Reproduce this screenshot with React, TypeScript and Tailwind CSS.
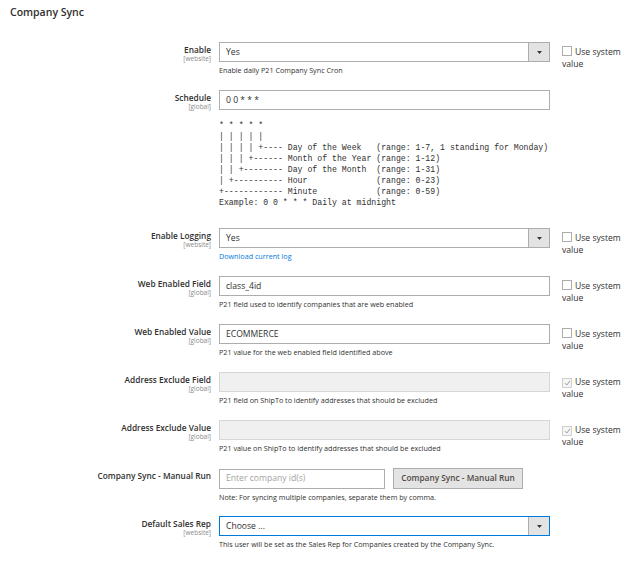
import React from 'react'

const cron = `* * * * *
| | | | |
| | | | +---- Day of the Week   (range: 1-7, 1 standing for Monday)
| | | +------ Month of the Year (range: 1-12)
| | +-------- Day of the Month  (range: 1-31)
| +---------- Hour              (range: 0-23)
+------------ Minute            (range: 0-59)
Example: 0 0 * * * Daily at midnight`

type RowProps = {
  label: string
  scope?: string
  system?: 'off' | 'on'
  className: string
  children: React.ReactNode
}

const Row: React.FC<RowProps> = ({ label, scope, system, className, children }) => (
  <div className={`flex ${className}`}>
    <div className="w-[211px] shrink-0 pt-[3px] text-right">
      <div className="text-[8.3px] font-semibold leading-[10px]">{label}</div>
      {scope && <div className="text-[6.5px] leading-[8px] text-[#8a8a8a]">[{scope}]</div>}
    </div>
    <div className="ml-[8px] w-[331px] shrink-0">{children}</div>
    {system && (
      <div className="ml-[12px] w-[62px] whitespace-nowrap pt-[4px] text-[8.6px] leading-[12px]">
        {system === 'on' ? (
          <span className="mr-[3px] inline-flex h-[10px] w-[10px] items-center justify-center border border-[#d0d0d0] bg-[#f5f5f5] align-[-1px]">
            <svg width="7" height="6" viewBox="0 0 7 6">
              <path d="M1 3.2 L2.8 5 L6 1" fill="none" stroke="#9a9a9a" strokeWidth="1" />
            </svg>
          </span>
        ) : (
          <span className="mr-[3px] inline-block h-[10px] w-[10px] border border-[#adadad] bg-white align-[-1px]" />
        )}
        Use system
        <br />
        value
      </div>
    )}
  </div>
)

const Select: React.FC<{ value: string; focused?: boolean }> = ({ value, focused }) => (
  <div
    className={`flex h-[20px] items-stretch border bg-white ${focused ? 'border-[#007bdb]' : 'border-[#adadad]'}`}
  >
    <div className="flex flex-1 items-center px-[6px] text-[8.6px]">{value}</div>
    <div className="flex w-[21px] items-center justify-center border-l border-[#adadad] bg-[#e3e3e3]">
      <svg width="5" height="3" viewBox="0 0 5 3">
        <path d="M0 0 L5 0 L2.5 3 Z" fill="#41362f" />
      </svg>
    </div>
  </div>
)

const Input: React.FC<{ value?: string; disabled?: boolean }> = ({ value, disabled }) => (
  <div
    className={`flex h-[20px] items-center border px-[6px] text-[8.6px] ${
      disabled ? 'border-[#d6d6d6] bg-[#f0f0f0]' : 'border-[#adadad] bg-white'
    }`}
  >
    {value}
  </div>
)

const Hint: React.FC<{ children: React.ReactNode }> = ({ children }) => (
  <div className="mt-[3px] text-[7.2px] leading-[10px]">{children}</div>
)

export default function App() {
  return (
    <div
      className="h-[563px] w-[624px] overflow-hidden bg-white text-[#303030]"
      style={{ fontFamily: '"Open Sans", "Noto Sans", sans-serif' }}
    >
      <h2 className="pl-[10px] pt-[5px] text-[10.5px] font-semibold leading-[14px]">Company Sync</h2>

      <div className="mt-[23px]">
        <Row label="Enable" scope="website" system="off" className="h-[48px]">
          <Select value="Yes" />
          <Hint>Enable daily P21 Company Sync Cron</Hint>
        </Row>

        <Row label="Schedule" scope="global" className="h-[138px]">
          <Input value="0 0 * * *" />
          <pre
            className="mt-[10px] whitespace-pre text-[8.2px] leading-[11px]"
            style={{ fontFamily: '"Liberation Mono", "Courier New", monospace' }}
          >
            {cron}
          </pre>
        </Row>

        <Row label="Enable Logging" scope="website" system="off" className="h-[48px]">
          <Select value="Yes" />
          <Hint>
            <span className="text-[#007bdb]">Download current log</span>
          </Hint>
        </Row>

        <Row label="Web Enabled Field" scope="global" system="off" className="h-[48px]">
          <Input value="class_4id" />
          <Hint>P21 field used to identify companies that are web enabled</Hint>
        </Row>

        <Row label="Web Enabled Value" scope="global" system="off" className="h-[48px]">
          <Input value="ECOMMERCE" />
          <Hint>P21 value for the web enabled field identified above</Hint>
        </Row>

        <Row label="Address Exclude Field" scope="global" system="on" className="h-[48px]">
          <Input disabled />
          <Hint>P21 field on ShipTo to identify addresses that should be excluded</Hint>
        </Row>

        <Row label="Address Exclude Value" scope="global" system="on" className="h-[48px]">
          <Input disabled />
          <Hint>P21 value on ShipTo to identify addresses that should be excluded</Hint>
        </Row>

        <Row label="Company Sync - Manual Run" className="h-[48px]">
          <div className="flex items-center">
            <div className="flex h-[20px] w-[166px] items-center border border-[#adadad] bg-white px-[6px] text-[8.6px] text-[#a3a3a3]">
              Enter company id(s)
            </div>
            <button className="ml-[8px] h-[21px] w-[130px] border border-[#adadad] bg-[#e3e3e3] text-[8.3px] font-semibold text-[#514943]">
              Company Sync - Manual Run
            </button>
          </div>
          <Hint>Note: For syncing multiple companies, separate them by comma.</Hint>
        </Row>

        <Row label="Default Sales Rep" scope="website" className="h-[48px]">
          <Select value="Choose ..." focused />
          <Hint>This user will be set as the Sales Rep for Companies created by the Company Sync.</Hint>
        </Row>
      </div>
    </div>
  )
}
